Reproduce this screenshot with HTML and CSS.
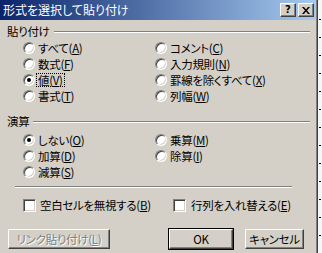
FILE: index.html
```html
<!DOCTYPE html>
<html lang="ja">
<head>
<meta charset="utf-8">
<title>形式を選択して貼り付け</title>
<link rel="stylesheet" href="styles.css">
</head>
<body>
<div class="screen">
  <div class="dialog">
    <div class="titlebar">
      <span class="title">形式を選択して貼り付け</span>
      <div class="caption-btns">
        <span class="cbtn help">?</span>
        <span class="cbtn close"><svg width="8" height="7" viewBox="0 0 8 7"><path d="M0 0h2l2 2.5L6 0h2L5 3.5 8 7H6L4 4.5 2 7H0l3-3.5z"/></svg></span>
      </div>
    </div>
    <div class="body">
      <div class="group-head head-paste"><span class="glabel">貼り付け</span><i class="etch"></i></div>
      <div class="options">
        <div class="opt"><span class="radio"></span><span class="lbl">すべて(<u>A</u>)</span></div>
        <div class="opt"><span class="radio"></span><span class="lbl">コメント(<u>C</u>)</span></div>
        <div class="opt"><span class="radio"></span><span class="lbl">数式(<u>F</u>)</span></div>
        <div class="opt"><span class="radio"></span><span class="lbl">入力規則(<u>N</u>)</span></div>
        <div class="opt"><span class="radio checked"></span><span class="lbl focus">値(<u>V</u>)</span></div>
        <div class="opt"><span class="radio"></span><span class="lbl">罫線を除くすべて(<u>X</u>)</span></div>
        <div class="opt"><span class="radio"></span><span class="lbl">書式(<u>T</u>)</span></div>
        <div class="opt"><span class="radio"></span><span class="lbl">列幅(<u>W</u>)</span></div>
      </div>
      <div class="group-head head-op"><span class="glabel">演算</span><i class="etch"></i></div>
      <div class="options">
        <div class="opt"><span class="radio checked"></span><span class="lbl">しない(<u>O</u>)</span></div>
        <div class="opt"><span class="radio"></span><span class="lbl">乗算(<u>M</u>)</span></div>
        <div class="opt"><span class="radio"></span><span class="lbl">加算(<u>D</u>)</span></div>
        <div class="opt"><span class="radio"></span><span class="lbl">除算(<u>I</u>)</span></div>
        <div class="opt"><span class="radio"></span><span class="lbl">減算(<u>S</u>)</span></div>
      </div>
      <i class="separator"></i>
      <div class="checks">
        <div class="opt check-a"><span class="checkbox"></span><span class="lbl">空白セルを無視する(<u>B</u>)</span></div>
        <div class="opt check-b"><span class="checkbox"></span><span class="lbl">行列を入れ替える(<u>E</u>)</span></div>
      </div>
      <div class="buttons">
        <span class="btn disabled link">リンク貼り付け(<u>L</u>)</span>
        <span class="btn default ok">OK</span>
        <span class="btn cancel">キャンセル</span>
      </div>
    </div>
  </div>
  <div class="strip"></div>
</div>
</body>
</html>
```

FILE: styles.css
```css
html, body {
  margin: 0;
  padding: 0;
  background: #d4d0c8;
}

.screen {
  display: flex;
  width: 322px;
  height: 253px;
  overflow: hidden;
  font-family: "Noto Sans CJK JP", "Noto Sans", sans-serif;
  font-size: 11.5px;
  letter-spacing: -0.3px;
  line-height: 16px;
  font-feature-settings: "palt";
  color: #000;
}

.dialog {
  width: 316px;
  flex: none;
  border-right: 1px solid #808080;
  box-shadow: 1px 0 0 #404040;
  margin-right: 1px;
  background: #d4d0c8;
  display: flex;
  flex-direction: column;
}

.strip {
  flex: 1;
  background-color: #f6f6f6;
  background-image: repeating-linear-gradient(180deg, transparent 0 17px, #000 17px 18px);
  background-size: 2px 100%;
  background-repeat: no-repeat;
  background-position: 1px 2px;
}

.titlebar {
  height: 20px;
  display: flex;
  align-items: center;
  background: linear-gradient(90deg, #0a246a 0%, #a6caf0 100%);
  padding-left: 3px;
  padding-right: 2px;
}

.title {
  color: #fff;
  font-size: 12px;
  letter-spacing: 0;
  font-weight: normal;
  flex: 1;
  white-space: nowrap;
}

.caption-btns {
  display: flex;
  gap: 2px;
}

.cbtn {
  width: 14px;
  height: 12px;
  background: #d4d0c8;
  border: 1px solid;
  border-color: #fff #404040 #404040 #fff;
  box-shadow: inset -1px -1px 0 #808080;
  display: flex;
  align-items: center;
  justify-content: center;
  font-family: "DejaVu Sans", sans-serif;
  font-weight: bold;
  font-size: 10px;
  letter-spacing: 0;
  line-height: 12px;
}

.close svg {
  fill: #000;
}

.body {
  flex: 1;
  display: flex;
  flex-direction: column;
}

.group-head {
  display: flex;
  align-items: center;
  height: 14px;
  padding-left: 7px;
  margin-right: 6px;
}

.head-paste {
  margin-top: 4px;
}

.head-op {
  margin-top: 10px;
}

.glabel {
  white-space: nowrap;
}

.etch {
  flex: 1;
  border-top: 1px solid #808080;
  border-bottom: 1px solid #fff;
  height: 0;
  margin-left: 4px;
  margin-top: 1px;
}

.options {
  display: grid;
  grid-template-columns: 132px 1fr;
  grid-auto-rows: 16px;
  padding-left: 23px;
  margin-top: 2px;
}

.head-op + .options {
  margin-top: 4px;
}

.opt {
  display: flex;
  align-items: center;
  white-space: nowrap;
}

.radio {
  width: 10px;
  height: 10px;
  flex: none;
  border-radius: 50%;
  background: #fff;
  border: 1px solid;
  border-color: #808080 #fff #fff #808080;
  box-shadow: inset 1px 1px 0 #404040, inset -1px -1px 0 #d4d0c8;
  margin-right: 3px;
  position: relative;
}

.radio.checked::after {
  content: "";
  position: absolute;
  left: 3px;
  top: 3px;
  width: 4px;
  height: 4px;
  border-radius: 50%;
  background: #000;
}

.lbl u {
  text-decoration: underline;
  text-underline-offset: 1px;
}

.focus {
  outline: 1px dotted #000;
  outline-offset: 0;
  padding: 0 1px;
  margin-left: -1px;
  line-height: 12px;
}

.separator {
  display: block;
  margin: 6px 0 0 15px;
  width: 277px;
  border-top: 1px solid #808080;
  border-bottom: 1px solid #fff;
}

.checks {
  display: flex;
  margin-top: 9px;
  padding-left: 23px;
  height: 16px;
}

.check-a {
  width: 150px;
}

.checkbox {
  width: 9px;
  height: 9px;
  flex: none;
  background: #fff;
  border: 1px solid;
  border-color: #808080 #fff #fff #808080;
  box-shadow: inset 1px 1px 0 #404040, inset -1px -1px 0 #d4d0c8;
  margin-right: 4px;
  padding: 1px;
}

.check-b .checkbox {
  margin-right: 5px;
}

.buttons {
  display: flex;
  margin-top: 16px;
  padding-left: 8px;
}

.btn {
  box-sizing: border-box;
  height: 20px;
  display: flex;
  align-items: center;
  justify-content: center;
  background: #d4d0c8;
  border: 1px solid;
  border-color: #fff #404040 #404040 #fff;
  box-shadow: inset -1px -1px 0 #808080;
  white-space: nowrap;
}

.link {
  width: 102px;
  color: #808080;
  text-shadow: 1px 1px 0 #fff;
}

.ok {
  width: 64px;
  margin-left: 59px;
  outline: 1px solid #000;
}

.cancel {
  width: 59px;
  margin-left: 12px;
}
```
